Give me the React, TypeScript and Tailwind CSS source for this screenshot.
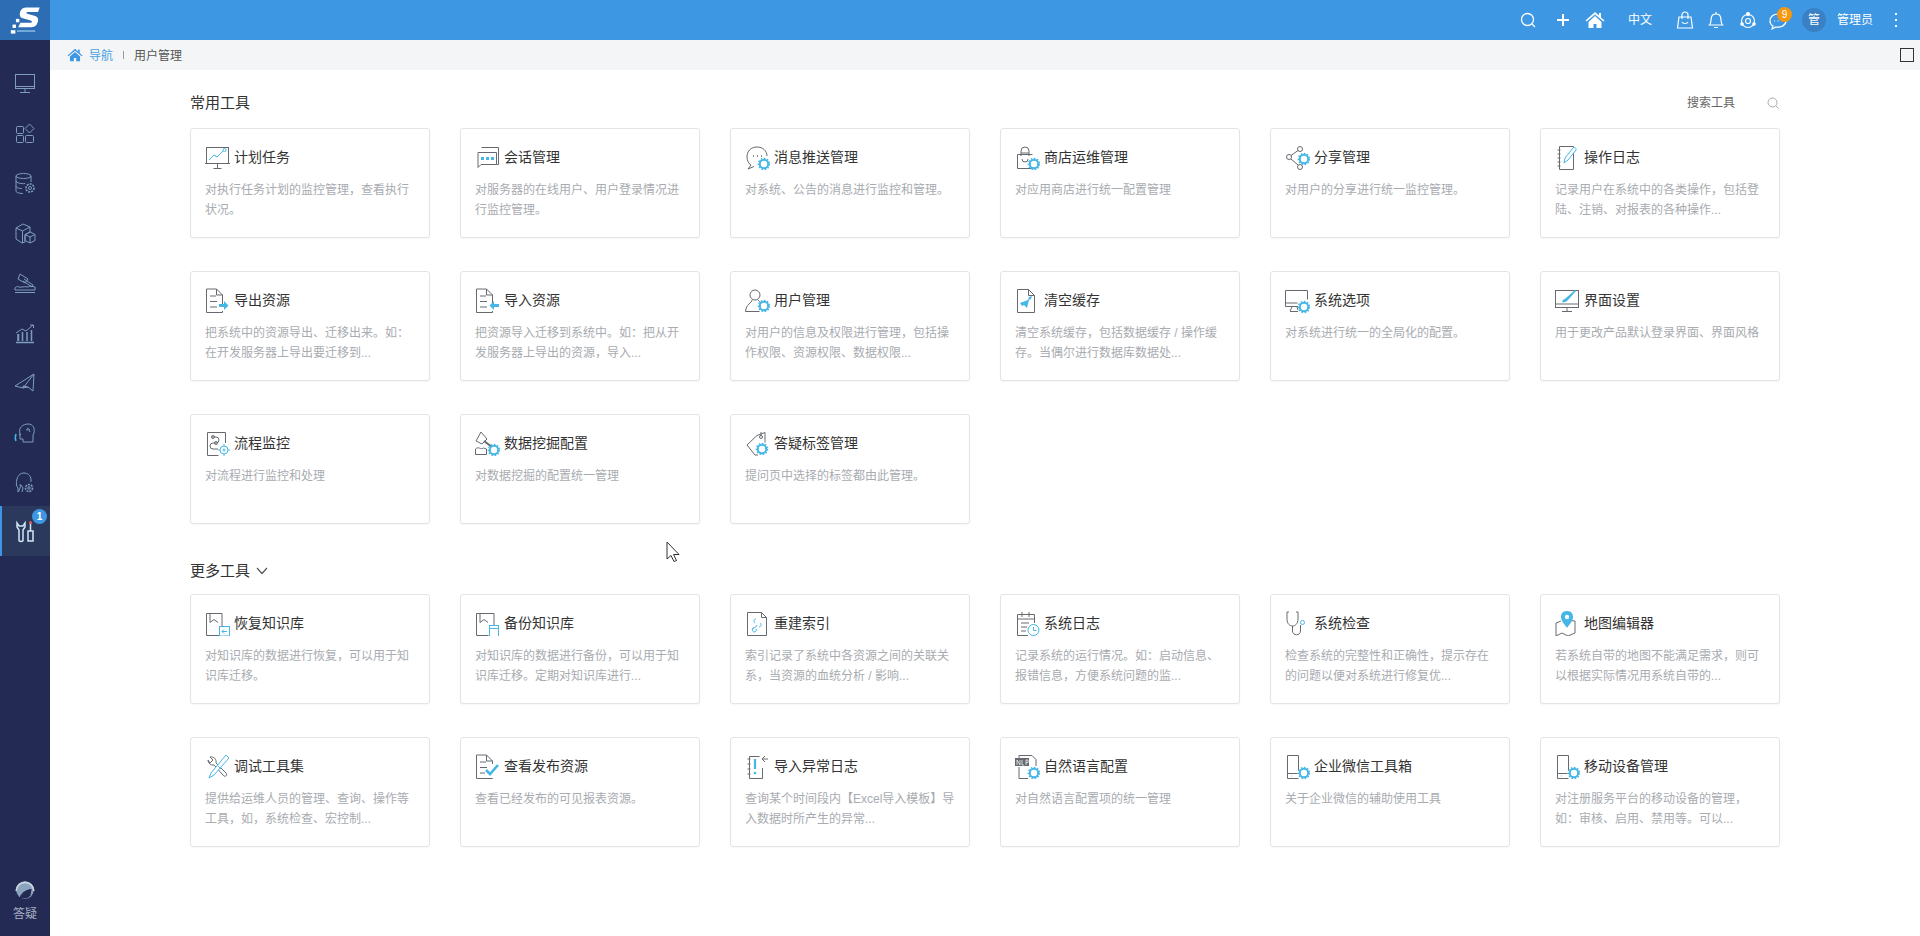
import React from "react";

const B = "#45b7e6";
const G = "#666a70";

function Gear({ cx, cy, r = 4.2 }: { cx: number; cy: number; r?: number }) {
  return (
    <g fill="none" stroke={B}>
      <circle cx={cx} cy={cy} r={r} fill="#fff" strokeWidth={2} />
      <circle cx={cx} cy={cy} r={r + 1.4} strokeWidth={1.4} strokeDasharray="1.6 1.6" />
    </g>
  );
}

const icons: Record<string, React.ReactNode> = {
  plan: (
    <>
      <rect x="2.5" y="3.5" width="22" height="16" />
      <path d="M1 19.5h25M13.5 20v4M9.5 24.5h8" />
      <path d="M5 16l5-5 3 2 6-6" stroke={B} />
      <circle cx="20.5" cy="6" r="1.5" stroke={B} />
    </>
  ),
  chat: (
    <>
      <path d="M7.5 3.5h17v17h-2M4 8.5v15l3-3h15.5v-12z" />
      <rect x="7" y="13" width="3" height="3" fill={B} stroke="none" />
      <rect x="12" y="13" width="3" height="3" fill={B} stroke="none" />
      <rect x="17" y="13" width="3" height="3" fill={B} stroke="none" />
    </>
  ),
  msg: (
    <>
      <path d="M13 3C7 3 3 7 3 13c0 4 2 7 4 8l-3 4 6-2.500" />
      <path d="M13 3c6 0 10 4 10 9" />
      <path d="M9 12h1M13 12h1M17 12h1" strokeWidth={1.6} />
      <Gear cx={20} cy={20} />
    </>
  ),
  shop: (
    <>
      <path d="M3.500 10.500h15M3.500 10.500v14h14" />
      <path d="M7 12V7a4 4 0 0 1 8 0v5M7 9h8" />
      <path d="M8 15a3 3 0 0 0 6 0" />
      <Gear cx={20} cy={20} />
    </>
  ),
  share: (
    <>
      <circle cx="16" cy="5" r="2.500" />
      <circle cx="5" cy="13" r="2.500" />
      <circle cx="16" cy="23" r="2.500" />
      <path d="M7 11.500l7-5M7 15l7 6" />
      <Gear cx={20} cy={15} />
    </>
  ),
  log: (
    <>
      <path d="M5.500 2.500h14v23h-14z" />
      <path d="M3.500 6h3M3.500 10h3M3.500 14h3M3.500 18h3M3.500 22h3" />
      <path d="M10 19l1-5 8-10c1-1.500 4 .5 3 2l-8 10z" stroke={B} fill="#fff" />
    </>
  ),
  exp: (
    <>
      <path d="M18.500 17V8l-6-6h-10v23.500h16V24" />
      <path d="M12.500 2v6h6M6 9h6M6 14.500h7M6 20h7" />
      <path d="M15 17h5v-3l4.500 4.500-4.500 4.500v-3h-5z" fill={B} stroke="none" />
    </>
  ),
  imp: (
    <>
      <path d="M18.500 17V8l-6-6h-10v23.500h16V24" />
      <path d="M12.500 2v6h6M6 9h6M6 14.500h7M6 20h7" />
      <path d="M25 17h-5v-3l-4.500 4.500 4.500 4.500v-3h5z" fill={B} stroke="none" />
    </>
  ),
  user: (
    <>
      <circle cx="11" cy="8" r="5" />
      <path d="M8 13c0 3-6 4-6.500 11.500h14" />
      <path d="M14 13c1 1.500 2 2 3 2.500" />
      <Gear cx={20} cy={19} />
    </>
  ),
  cache: (
    <>
      <path d="M3.500 2.500h11l6 6v17h-17z" />
      <path d="M14.500 2.500v6h6" />
      <path d="M6 16l8-3 1-3 3-1-1 3-2 1-2 8-3-3-2 1z" fill={B} stroke="none" />
    </>
  ),
  sys: (
    <>
      <path d="M14 19.500H1.500v-16h22v9" />
      <path d="M1.500 16h12M6 24.500h8M8 20l-2 4M13 20l1 3" />
      <Gear cx={20} cy={20} />
    </>
  ),
  ui: (
    <>
      <rect x="1.500" y="3.500" width="23" height="17" />
      <path d="M1.500 17h23M13 21v3M8 24.500h10" />
      <path d="M8 15c1-3 3-3 4-4l9-8 1 1-8 9c-1 1-3 3-6 2z" fill={B} stroke="none" />
    </>
  ),
  flow: (
    <>
      <path d="M21.500 13V2.500h-18v23h11" />
      <path d="M8 7h4a3 3 0 0 1 0 6H9a3 3 0 0 0 0 6h5" />
      <circle cx="9" cy="7" r="1.500" />
      <circle cx="12" cy="13" r="1.500" />
      <circle cx="20" cy="20" r="4" stroke={B} fill="#fff" />
      <circle cx="20" cy="20" r="1" stroke={B} />
      <path d="M20 14v2M20 24v2M14 20h2M24 20h2" stroke={B} />
    </>
  ),
  mine: (
    <>
      <path d="M7 2l6 7-5 5-6-3z" />
      <path d="M10 11l8 6" strokeWidth={2} />
      <path d="M1.500 19c3-3 5 1 8-1l3 1v5.500h-11z" />
      <Gear cx={20} cy={20} />
    </>
  ),
  tag: (
    <>
      <path d="M13 5.500l8-3v8M13 5.500L3 15l8 10h3M21 10.500v2" />
      <circle cx="17" cy="7" r="1.500" />
      <path d="M17 2v4" />
      <Gear cx={18} cy={19} />
    </>
  ),
  restore: (
    <>
      <path d="M18 19V3.500H2.500v22h14" />
      <path d="M6 3.500v9l4-3 4 3" />
      <rect x="15.500" y="16.500" width="10" height="9.500" fill="#fff" stroke={B} />
      <path d="M23 21.500h-5M20 19.500l-2 2 2 2" stroke={B} />
    </>
  ),
  backup: (
    <>
      <path d="M20 15V3.500H2.500v22h12" />
      <path d="M6 3.500v9l4-3 4 3" />
      <rect x="15.500" y="15.500" width="9" height="11" fill="#fff" stroke={B} />
      <path d="M15.500 18.500h9" stroke={B} />
    </>
  ),
  index: (
    <>
      <path d="M3.500 2.500h14l5 5v18h-19z" />
      <path d="M17.500 2.500v5h5" />
      <path d="M8 20c0-3 5-2 5-5M12 9c-2 0-3 3-1 4M16 13c2 1 1 4-1 4M10 18c-2 0-2 4 0 4 2 0 3-2 2-3" stroke={B} />
    </>
  ),
  syslog: (
    <>
      <path d="M14 25.500H3.500V4.500h17V13" />
      <path d="M8 2v5M15 2v5M3.500 9h17M7 13h8M7 17h6M7 21h5" />
      <circle cx="19.500" cy="20" r="5.500" stroke={B} fill="#fff" />
      <path d="M19.500 17v3.500h3" stroke={B} />
    </>
  ),
  check: (
    <>
      <path d="M5 2H3v7c0 5 3 7 5.500 7S14 14 14 9V2h-2" />
      <path d="M8.500 16v5c0 5 8 5 8 0v-6" />
      <circle cx="18.500" cy="12.500" r="2" stroke={B} />
    </>
  ),
  map: (
    <>
      <path d="M7 11l-5 2v13l6-3 6 3 7-3V11l-5-.5" />
      <path d="M13 1c-4.500 0-6 3-6 6 0 4 4 8 6 11 2-3 6-7 6-11 0-3-1.500-6-6-6z" fill={B} stroke="none" />
      <circle cx="13" cy="7" r="2.200" fill="#fff" stroke="none" />
    </>
  ),
  debug: (
    <>
      <path d="M4 7a5 5 0 0 0 6 5l9 10c2 3 5 0 3-2L12 10a5 5 0 0 0-6-6l3 3-3 3z" />
      <path d="M22 2l3 3-15 17-5 3 2-5z" stroke={B} fill="#fff" />
      <path d="M14 13l3 3" stroke={B} />
    </>
  ),
  pub: (
    <>
      <path d="M18.500 11V8l-6-6h-10v23.500h16V25" />
      <path d="M12.500 2v6h6M6 9h6M6 14.500h7M6 20h5" />
      <path d="M12 17l4 4 8-9" stroke={B} strokeWidth={2.600} />
    </>
  ),
  err: (
    <>
      <path d="M15.500 3.500h-10v22h13V15" />
      <path d="M3.500 6h3M3.500 11h3M3.500 16h3M3.500 21h3" />
      <path d="M11 6v10" stroke={B} strokeWidth={2.200} />
      <circle cx="11" cy="20" r="1.300" fill={B} stroke="none" />
      <path d="M24 6h-5M21 3l-3 3 3 3" />
    </>
  ),
  nlp: (
    <>
      <path d="M5 2.500h13l4 4V13M5 2.500V5M5 14v11.500h9" />
      <rect x="1" y="5" width="14" height="8" fill="#666a70" stroke="none" />
      <path d="M3 12V7l3 5V7M8 7v5h2M12 12V7h2v2.500h-2" stroke="#fff" strokeWidth={0.7} />
      <Gear cx={20} cy={20} />
    </>
  ),
  wx: (
    <>
      <path d="M14.500 18V2.500h-11v23h11" />
      <path d="M3.500 20.500h10M7 23h.5" />
      <Gear cx={20} cy={20} />
    </>
  ),
};

function Ico({ n }: { n: string }) {
  return (
    <svg width="26" height="26" viewBox="0 0 26 26" fill="none" stroke={G} strokeWidth="1" className="ml-[-1px] shrink-0">
      {icons[n]}
    </svg>
  );
}

const common: [string, string, string][] = [
  ["plan", "计划任务", "对执行任务计划的监控管理，查看执行状况。"],
  ["chat", "会话管理", "对服务器的在线用户、用户登录情况进行监控管理。"],
  ["msg", "消息推送管理", "对系统、公告的消息进行监控和管理。"],
  ["shop", "商店运维管理", "对应用商店进行统一配置管理"],
  ["share", "分享管理", "对用户的分享进行统一监控管理。"],
  ["log", "操作日志", "记录用户在系统中的各类操作，包括登陆、注销、对报表的各种操作..."],
  ["exp", "导出资源", "把系统中的资源导出、迁移出来。如：在开发服务器上导出要迁移到..."],
  ["imp", "导入资源", "把资源导入迁移到系统中。如：把从开发服务器上导出的资源，导入..."],
  ["user", "用户管理", "对用户的信息及权限进行管理，包括操作权限、资源权限、数据权限..."],
  ["cache", "清空缓存", "清空系统缓存，包括数据缓存 / 操作缓存。当偶尔进行数据库数据处..."],
  ["sys", "系统选项", "对系统进行统一的全局化的配置。"],
  ["ui", "界面设置", "用于更改产品默认登录界面、界面风格"],
  ["flow", "流程监控", "对流程进行监控和处理"],
  ["mine", "数据挖掘配置", "对数据挖掘的配置统一管理"],
  ["tag", "答疑标签管理", "提问页中选择的标签都由此管理。"],
];

const more: [string, string, string][] = [
  ["restore", "恢复知识库", "对知识库的数据进行恢复，可以用于知识库迁移。"],
  ["backup", "备份知识库", "对知识库的数据进行备份，可以用于知识库迁移。定期对知识库进行..."],
  ["index", "重建索引", "索引记录了系统中各资源之间的关联关系，当资源的血统分析 / 影响..."],
  ["syslog", "系统日志", "记录系统的运行情况。如：启动信息、报错信息，方便系统问题的监..."],
  ["check", "系统检查", "检查系统的完整性和正确性，提示存在的问题以便对系统进行修复优..."],
  ["map", "地图编辑器", "若系统自带的地图不能满足需求，则可以根据实际情况用系统自带的..."],
  ["debug", "调试工具集", "提供给运维人员的管理、查询、操作等工具，如，系统检查、宏控制..."],
  ["pub", "查看发布资源", "查看已经发布的可见报表资源。"],
  ["err", "导入异常日志", "查询某个时间段内【Excel导入模板】导入数据时所产生的异常..."],
  ["nlp", "自然语言配置", "对自然语言配置项的统一管理"],
  ["wx", "企业微信工具箱", "关于企业微信的辅助使用工具"],
  ["wx", "移动设备管理", "对注册服务平台的移动设备的管理，如：审核、启用、禁用等。可以..."],
];

function Card({ item }: { item: [string, string, string] }) {
  return (
    <div className="h-[110px] w-[240px] rounded-[3px] border border-[#e2e4e8] bg-white pl-[14px] pr-[14px] pt-[15px] shadow-[0_1px_2px_rgba(0,0,0,0.04)]">
      <div className="flex h-[26px] items-center gap-[4px]">
        <Ico n={item[0]} />
        <span className="text-[14px] text-[#333]">{item[1]}</span>
      </div>
      <p className="mt-[11px] text-[12px] leading-[19.5px] text-[#a8abb0]">{item[2]}</p>
    </div>
  );
}

const sv = { width: 24, height: 24, viewBox: "0 0 24 24", fill: "none", stroke: "#7f9cc0", strokeWidth: 1 };

const side: React.ReactNode[] = [
  <svg {...sv}><rect x="2.500" y="3.500" width="19" height="14" /><path d="M2.500 15.500h19M12 18v3M7 21.500h10" /></svg>,
  <svg {...sv}><rect x="3.500" y="5.500" width="7" height="7" rx="1" /><rect x="3.500" y="14.500" width="7" height="7" rx="1" /><rect x="12.500" y="14.500" width="8" height="7" rx="1" /><path d="M16.500 3l4.500 4.500-4.500 4.500-4.500-4.500z" /></svg>,
  <svg {...sv}><ellipse cx="10.500" cy="5" rx="7.500" ry="2.500" /><path d="M3 5v15c0 2 5 2.500 7 2.500M18 5v6M3 10c0 2 6 3 9 2.500M3 15c0 2 4 2.500 6 2.500" /><circle cx="17" cy="17" r="4" strokeDasharray="2 1" strokeWidth="1.600" /><circle cx="17" cy="17" r="1.500" /></svg>,
  <svg {...sv}><path d="M10 3l7 3v5l-5 3v7l-3 1-6-4V7z" /><path d="M3 7l6.500 3 7.500-4M9.500 10v12" /><path d="M17 11l5 2.500v6l-5 2.500-5-2.500v-6zM12 13.500l5 2.500 5-2.500M17 16v6" /></svg>,
  <svg {...sv}><path d="M7 3l8 5-3 4-7-4zM11 8l9 6-1 2-9-6" /><path d="M2 17c2-3 4 0 7-1s6 1 8-1l5 1v3H2zM2 21.500h20" /></svg>,
  <svg {...sv}><path d="M3 21.500h18M5 20v-7M5.500 20v-7M9.500 20v-9M14 20v-9M18.500 20V9" strokeWidth="1.500" /><path d="M3 12l6-4 4 2 7-6M17 4h3.500v3" /></svg>,
  <svg {...sv}><path d="M2 15l19-12-1 17-5-4-5 1zM21 3L10 17v-2" /><path d="M10 15l5 1" /></svg>,
  <svg {...sv}><path d="M7 13c-2-6 3-10 8-10s7 4 6 9l-1 2v7H10v-3H7zM8 13l-2 1" /><path d="M14 7l3 2M13 9a3 3 0 0 1 4 2" /><path d="M3 13c-1 3-1 5 0 7" strokeWidth="1.500" stroke="#45b7e6" /></svg>,
  <svg {...sv}><path d="M5 21v-4c-2-2-2-6-1-9 1-4 4-6 7-6s7 2 7 7v2M5 21c2-3 3-5 2-8" /><path d="M9 21l1-4-2-3" /><circle cx="16" cy="17" r="3.500" strokeWidth="1.600" strokeDasharray="2 1" /><circle cx="16" cy="17" r="1.300" /></svg>,
];

export default function App() {
  return (
    <div className="flex h-[936px] w-[1920px] overflow-hidden bg-white font-['Liberation_Sans','Noto_Sans_CJK_SC',sans-serif]">
      <aside className="flex h-full w-[50px] shrink-0 flex-col bg-[#232b54]">
        <div className="flex h-[40px] items-center justify-center bg-[#2d6db3]">
          <svg width="34" height="34" viewBox="0 0 30 30">
            <path d="M11 7c1-2 3-3 5-3h12l-1.500 4H17c-1 0-1 1 0 1.500l7 2c3 1 3 4 2 6-1 3-3 4-6 4H9l2-4h9c1.500 0 1.500-1.500 0-2l-7-2c-3-1-3-4-2-6.500z" fill="#fff" />
            <rect x="7" y="14" width="3" height="3" fill="#fff" />
            <rect x="4" y="19" width="3" height="3" fill="#fff" />
            <rect x="2.500" y="24" width="4" height="3" fill="#fff" />
            <rect x="8" y="24" width="16" height="1.500" fill="#7fb3e0" />
          </svg>
        </div>
        <div className="mt-[16px] flex flex-col">
          {side.map((s, i) => (
            <div key={i} className="flex h-[50px] items-center justify-center pt-[3px]">{s}</div>
          ))}
          <div className="relative flex h-[50px] items-center justify-center border-l-2 border-[#3d97e3] bg-[#2b3a5c] pr-[2px]">
            <svg {...sv} stroke="#cfe6f5">
              <path d="M4 4v4l2 3v10c0 2 4 2 4 0V11l2-3V4l-2 3H6z" strokeWidth="1.500" />
              <path d="M15 12h5v10h-5zM17.500 3v9" strokeWidth="1.500" />
              <circle cx="17.500" cy="3.500" r="1.500" fill="#e05a5a" stroke="none" />
            </svg>
            <span className="absolute right-[3px] top-[3px] flex h-[15px] w-[15px] items-center justify-center rounded-full bg-[#3d97e3] text-[10px] font-bold text-white">1</span>
          </div>
        </div>
        <div className="mt-auto flex flex-col items-center pb-[13px]">
          <svg width="22" height="22" viewBox="0 0 20 20">
            <circle cx="10" cy="10" r="8" fill="#8aa4bd" />
            <path d="M2 11a8 8 0 0 1 16 0" fill="none" stroke="#ccd6e0" strokeWidth="1.500" />
            <path d="M5 17c2-6 8-8 11-8l-1 6c-2 3-6 3-10 2z" fill="#232b54" />
          </svg>
          <span className="mt-[4px] text-[12px] leading-[18px] text-[#a9b1c4]">答疑</span>
        </div>
      </aside>

      <div className="flex min-w-0 flex-1 flex-col">
        <header className="flex h-[40px] items-center justify-end bg-[#3d97e3] text-white">
          <svg width="16" height="16" viewBox="0 0 16 16" fill="none" stroke="#fff" strokeWidth="1.300" className="mr-[20px]"><circle cx="7.500" cy="7.500" r="6" /><path d="M12 12l3 3" /></svg>
          <svg width="14" height="14" viewBox="0 0 14 14" fill="none" stroke="#fff" strokeWidth="2" className="mr-[15px]"><path d="M7 1v12M1 7h12" /></svg>
          <svg width="20" height="18" viewBox="0 0 20 18" fill="#fff" className="mr-[23px]"><path d="M10 1L0.500 9.500l1 1L10 3.500l8.500 7 1-1-3.500-3V2h-2v2.500zM3.500 11v6h5v-4h3v4h5v-6L10 5z" /></svg>
          <span className="mr-[24px] text-[12px]">中文</span>
          <svg width="18" height="18" viewBox="0 0 18 18" fill="none" stroke="#fff" strokeWidth="1.200" className="mr-[14px]"><path d="M3 6h12l1.500 11h-15zM6 8V4a3 3 0 0 1 6 0v4M6 11c1 2 5 2 6 0" /></svg>
          <svg width="16" height="18" viewBox="0 0 16 18" fill="none" stroke="#fff" strokeWidth="1.200" className="mr-[15px]"><path d="M1.500 14c2-2 1-4 2-8s8-4 9 0 0 6 2 8zM6 16.500h4M8 1v1.500" /></svg>
          <svg width="18" height="18" viewBox="0 0 18 18" fill="none" stroke="#fff" strokeWidth="1.200" className="mr-[12px]"><circle cx="9" cy="10" r="6.500" /><circle cx="9" cy="10" r="2.500" /><circle cx="9" cy="3" r="1.500" fill="#fff" /><circle cx="3" cy="13" r="1.200" fill="#fff" /><circle cx="15" cy="13" r="1.200" fill="#fff" /></svg>
          <div className="relative mr-[15px] h-[20px] w-[18px]">
            <svg width="18" height="18" viewBox="0 0 18 18" fill="none" stroke="#fff" strokeWidth="1.200" className="mt-[2px]"><path d="M9 2C4 2 1 5 1 9c0 2 1 4 3 5l-1 3 4-2c5 1 10-2 10-6" /><path d="M5 9h1M8.500 9h1" /></svg>
            <span className="absolute left-[8px] top-[-3px] flex h-[15px] w-[15px] items-center justify-center rounded-full bg-[#f5980f] text-[10px] text-white">9</span>
          </div>
          <span className="flex h-[24px] w-[24px] items-center justify-center rounded-full bg-[#3a80c4] text-[12px]">管</span>
          <span className="ml-[11px] text-[12px]">管理员</span>
          <svg width="4" height="14" viewBox="0 0 4 14" fill="#fff" className="ml-[21px] mr-[22px]"><rect x="1" y="0" width="2" height="2" /><rect x="1" y="6" width="2" height="2" /><rect x="1" y="12" width="2" height="2" /></svg>
        </header>

        <div className="flex h-[30px] items-center bg-[#f4f5f6] pl-[17px] pr-[6px] text-[12px]">
          <svg width="16" height="14" viewBox="0 0 20 18" fill="#3d97e3"><path d="M10 1L0.500 9.500l1 1L10 3.500l8.500 7 1-1-3.500-3V2h-2v2.500zM3.500 11v6h5v-4h3v4h5v-6L10 5z" /></svg>
          <span className="ml-[6px] pt-[2px] text-[#4a9fe4]">导航</span>
          <span className="mx-[10px] h-[8px] w-px bg-[#999]" />
          <span className="pt-[2px] text-[#555]">用户管理</span>
          <span className="ml-auto h-[14px] w-[14px] border border-[#333]" />
        </div>

        <main className="relative pl-[140px]">
          <div className="w-[1590px]">
            <div className="flex h-[58px] items-center justify-between pt-[8px]">
              <span className="text-[15px] text-[#333]">常用工具</span>
              <div className="flex items-center gap-[32px] pr-[1px]">
                <span className="text-[12px] text-[#666]">搜索工具</span>
                <svg width="12" height="12" viewBox="0 0 12 12" fill="none" stroke="#aaa" strokeWidth="1"><circle cx="5.500" cy="5.500" r="4.500" /><path d="M9 9l2.500 2.500" /></svg>
              </div>
            </div>
            <div className="grid grid-cols-[repeat(6,240px)] gap-x-[30px] gap-y-[33px]">
              {common.map((c) => <Card key={c[1]} item={c} />)}
            </div>
            <div className="flex h-[70px] items-center gap-[6px] pt-[24px]">
              <span className="text-[15px] text-[#333]">更多工具</span>
              <svg width="12" height="8" viewBox="0 0 12 8" fill="none" stroke="#555" strokeWidth="1.200"><path d="M1 1l5 5.500L11 1" /></svg>
            </div>
            <div className="grid grid-cols-[repeat(6,240px)] gap-x-[30px] gap-y-[33px]">
              {more.map((c) => <Card key={c[1]} item={c} />)}
            </div>
          </div>
          <svg width="14" height="22" viewBox="0 0 14 22" className="absolute left-[616px] top-[471px]"><path d="M1 1v17l4-3.500 3 6 2.500-1-3-6H13z" fill="#fff" stroke="#333" strokeWidth="1" /></svg>
        </main>
      </div>
    </div>
  );
}
